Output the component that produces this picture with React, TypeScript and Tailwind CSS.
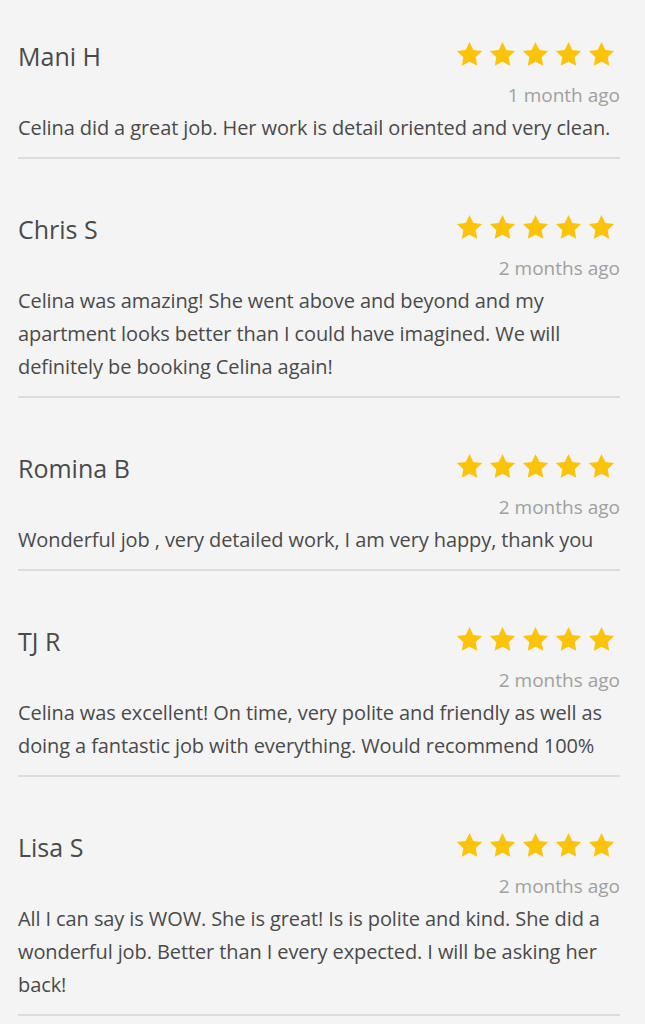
import React from "react";

const reviews = [
  { name: "Mani H", date: "1 month ago", text: "Celina did a great job. Her work is detail oriented and very clean." },
  { name: "Chris S", date: "2 months ago", text: "Celina was amazing! She went above and beyond and my apartment looks better than I could have imagined. We will definitely be booking Celina again!" },
  { name: "Romina B", date: "2 months ago", text: "Wonderful job , very detailed work, I am very happy, thank you" },
  { name: "TJ R", date: "2 months ago", text: "Celina was excellent! On time, very polite and friendly as well as doing a fantastic job with everything. Would recommend 100%" },
  { name: "Lisa S", date: "2 months ago", text: "All I can say is WOW. She is great! Is is polite and kind. She did a wonderful job. Better than I every expected. I will be asking her back!" },
];

function Star() {
  return (
    <svg width="27" height="26" viewBox="0 0 24 23" className="block">
      <path
        d="M12 0.8l3.4 7.1 7.8 1-5.7 5.4 1.4 7.7L12 18.3l-6.9 3.7 1.4-7.7L0.8 8.9l7.8-1z"
        fill="#fcc30b"
      />
    </svg>
  );
}

export default function App() {
  return (
    <div
      className="min-h-[1024px] bg-[#f4f4f4] px-[18px] pt-[33px] text-[#4a4a4a]"
      style={{ fontFamily: "'Open Sans', 'Noto Sans', sans-serif" }}
    >
      <div className="flex flex-col gap-[47px] w-[602px]">
        {reviews.map((r) => (
          <div key={r.name} className="border-b-2 border-[#dcdcdc] pb-[13px]">
            <div className="flex items-center justify-between h-[44px]">
              <div className="text-[25px] leading-[44px] text-[#4a4a4a] translate-y-[1px]">{r.name}</div>
              <div className="flex gap-[6px] pr-[5px] -translate-y-[1px]">
                <Star />
                <Star />
                <Star />
                <Star />
                <Star />
              </div>
            </div>
            <div className="text-right text-[19px] leading-[32px] pt-[2px] text-[#a0a0a0]">{r.date}</div>
            <div className="text-[20px] tracking-[-0.1px] leading-[33px] text-[#4a4a4a] pr-[6px]">{r.text}</div>
          </div>
        ))}
      </div>
    </div>
  );
}
